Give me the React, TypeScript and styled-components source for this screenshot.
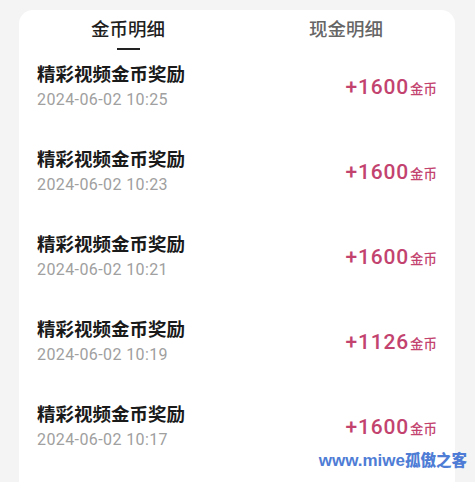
import React from 'react'
import styled, { createGlobalStyle } from 'styled-components'

const GlobalStyle = createGlobalStyle`
  html, body {
    margin: 0;
    padding: 0;
    background: #f4f4f4;
    font-family: "Liberation Sans", "Noto Sans CJK SC", sans-serif;
  }
`

const Page = styled.div`
  position: relative;
  height: 482px;
  overflow: hidden;
  padding: 10px 20px 0 19px;
  box-sizing: border-box;
`

const Card = styled.div`
  background: #fff;
  border-radius: 14px 14px 0 0;
  height: 100%;
`

const Tabs = styled.div`
  display: flex;
  height: 40px;
`

const Tab = styled.div<{ active?: boolean }>`
  flex: 1;
  display: flex;
  flex-direction: column;
  align-items: center;
  padding-top: 10px;
  font-size: 18.5px;
  line-height: 20px;
  font-weight: 500;
  color: ${({ active }) => (active ? '#1f1f1f' : '#666')};
`

const Underline = styled.div`
  width: 23px;
  height: 2px;
  margin-top: 8px;
  background: #222;
`

const Row = styled.div`
  display: flex;
  align-items: center;
  justify-content: space-between;
  height: 85px;
  box-sizing: border-box;
  padding: 13px 18px 24px 18px;
`

const Info = styled.div`
  display: flex;
  flex-direction: column;
  gap: 2px;
`

const Title = styled.div`
  font-size: 18.5px;
  line-height: 24px;
  font-weight: bold;
  color: #1a1a1a;
`

const Time = styled.div`
  font-family: Roboto, "Liberation Sans", sans-serif;
  font-size: 16px;
  line-height: 22px;
  letter-spacing: 0.4px;
  color: #a0a0a0;
`

const Amount = styled.div`
  display: flex;
  align-items: baseline;
  color: #c3436f;
  font-family: Roboto, "Liberation Sans", "Noto Sans CJK SC", sans-serif;
  font-weight: 500;
  font-size: 21px;
  letter-spacing: 0.8px;
`

const Unit = styled.span`
  font-family: "Noto Sans CJK SC", sans-serif;
  font-weight: 500;
  font-size: 13.5px;
  letter-spacing: 0;
  margin-left: 1px;
`

const Watermark = styled.div`
  position: absolute;
  right: 8px;
  bottom: 11px;
  display: flex;
  align-items: baseline;
  color: #3b6fd2;
  font-weight: bold;
  opacity: 0.9;
`

const WmLatin = styled.span`
  font-size: 17px;
`

const WmCjk = styled.span`
  font-size: 15.5px;
  font-family: "Noto Sans CJK SC", sans-serif;
  font-weight: 900;
`

const records = [
  { time: '2024-06-02 10:25', amount: '+1600' },
  { time: '2024-06-02 10:23', amount: '+1600' },
  { time: '2024-06-02 10:21', amount: '+1600' },
  { time: '2024-06-02 10:19', amount: '+1126' },
  { time: '2024-06-02 10:17', amount: '+1600' },
]

export default function App() {
  return (
    <Page>
      <GlobalStyle />
      <Card>
        <Tabs>
          <Tab active>
            金币明细
            <Underline />
          </Tab>
          <Tab>现金明细</Tab>
        </Tabs>
        {records.map((r) => (
          <Row key={r.time}>
            <Info>
              <Title>精彩视频金币奖励</Title>
              <Time>{r.time}</Time>
            </Info>
            <Amount>
              {r.amount}
              <Unit>金币</Unit>
            </Amount>
          </Row>
        ))}
      </Card>
      <Watermark>
        <WmLatin>www.miwe</WmLatin>
        <WmCjk>孤傲之客</WmCjk>
      </Watermark>
    </Page>
  )
}
